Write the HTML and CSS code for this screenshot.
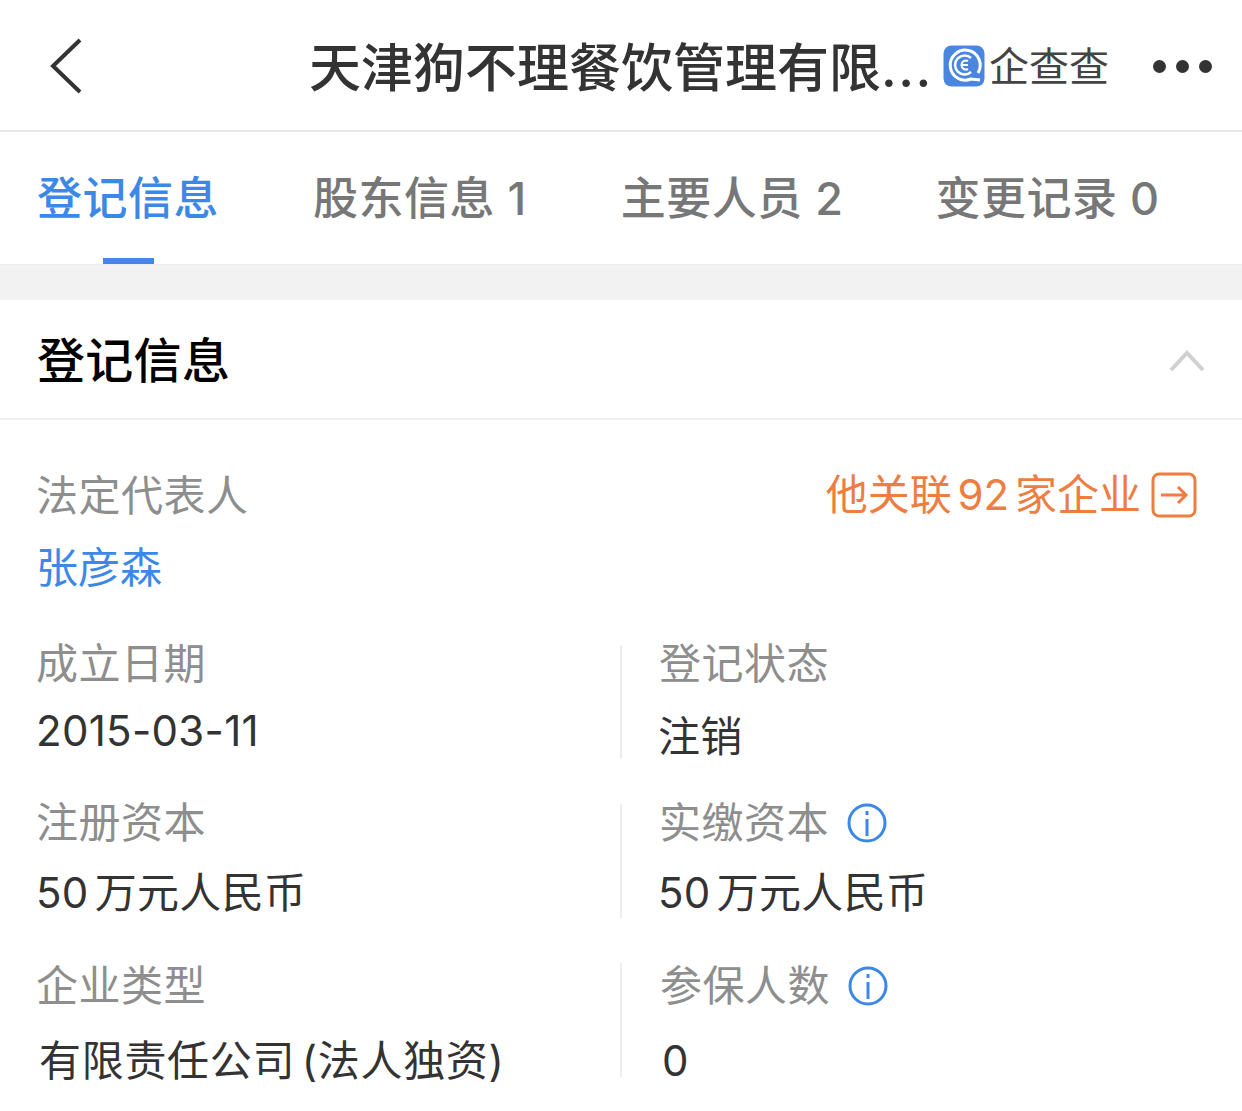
FILE: index.html
```html
<!DOCTYPE html>
<html lang="zh-CN">
<head>
  <meta charset="UTF-8" />
  <title>登记信息</title>
  <link rel="stylesheet" href="styles.css">
</head>
<body>

<div class="topbar">
  <svg class="back" width="34" height="56" viewBox="0 0 34 56"><path d="M31 2 L4 28 L31 54" fill="none" stroke="#333" stroke-width="4"/></svg>
  <div class="title">天津狗不理餐饮管理有限<span class="dots">...</span></div>
  <div class="brand">
    <svg width="42" height="42" viewBox="0 0 42 42">
      <rect width="41" height="41" x="0.5" y="0.5" rx="8" fill="#4a86e0"/>
      <path d="M35 28 A15 15 0 1 0 28 34 L37 35" fill="none" stroke="#fff" stroke-width="3"/>
      <path d="M28 27 A9.500 9.500 0 1 1 28 13" fill="none" stroke="#fff" stroke-width="2.500"/>
      <path d="M25 24 A4.500 4.500 0 1 1 25 16 M18 20 H25" fill="none" stroke="#fff" stroke-width="2"/>
    </svg>
    <span class="brand-name">企查查</span>
  </div>
  <div class="more"><i></i><i></i><i></i></div>
</div>

<div class="tabs">
  <div class="tab active">登记信息</div>
  <div class="tab">股东信息 1</div>
  <div class="tab">主要人员 2</div>
  <div class="tab last">变更记录 0</div>
</div>

<div class="band"></div>

<div class="section-head">
  <h2>登记信息</h2>
  <svg width="36" height="22" viewBox="0 0 36 22"><path d="M2 20 L18 3 L34 20" fill="none" stroke="#d0d0d0" stroke-width="4"/></svg>
</div>

<div class="info">
  <div class="person">
    <div class="person-top">
      <span class="label">法定代表人</span>
      <span class="link-out">他关联 92 家企业
        <svg width="46" height="46" viewBox="0 0 46 46"><rect x="2" y="2" width="42" height="42" rx="6" fill="none" stroke="#ee7d41" stroke-width="3"/><path d="M10 23 H35 M27 15 L35 23 L27 31" fill="none" stroke="#ee7d41" stroke-width="3"/></svg>
      </span>
    </div>
    <div class="person-name">张彦森</div>
  </div>

  <div class="grid">
    <div class="cell">
      <div class="label">成立日期</div>
      <div class="value date">2015-03-11</div>
    </div>
    <div class="cell right">
      <div class="label">登记状态</div>
      <div class="value tall">注销</div>
    </div>
    <div class="cell">
      <div class="label">注册资本</div>
      <div class="value mid">50 万元人民币</div>
    </div>
    <div class="cell right">
      <div class="label">实缴资本
        <svg class="tip" width="40" height="40" viewBox="0 0 40 40"><circle cx="20" cy="20" r="18" fill="none" stroke="#3c88e8" stroke-width="3"/><path d="M20 16 V33 M20 8 V12" fill="none" stroke="#3c88e8" stroke-width="3"/></svg>
      </div>
      <div class="value mid">50 万元人民币</div>
    </div>
    <div class="cell shift">
      <div class="label">企业类型</div>
      <div class="value">有限责任公司 (法人独资)</div>
    </div>
    <div class="cell right shift">
      <div class="label">参保人数
        <svg class="tip" width="40" height="40" viewBox="0 0 40 40"><circle cx="20" cy="20" r="18" fill="none" stroke="#3c88e8" stroke-width="3"/><path d="M20 16 V33 M20 8 V12" fill="none" stroke="#3c88e8" stroke-width="3"/></svg>
      </div>
      <div class="value">0</div>
    </div>
  </div>
</div>

</body>
</html>
```

FILE: styles.css
```css
* { box-sizing: border-box; }
html, body { height: 100%; }
body {
  margin: 0;
  background: #fff;
  color: #333;
  font-family: Inter, "Noto Sans CJK SC", sans-serif;
  overflow: hidden;
}
.topbar {
  height: 132px;
  border-bottom: 2px solid #e8e8e8;
  display: flex;
  align-items: center;
  padding: 4px 30px 2px 49px;
}
.back { flex: none; }
.title {
  margin: -4px 0 0 226px;
  font-size: 52px;
  font-weight: 500;
  white-space: nowrap;
  width: 634px;
  color: #333;
}
.dots { letter-spacing: 1.500px; }
.brand {
  display: flex;
  align-items: center;
  gap: 4px;
  width: 210px;
}
.brand-name { font-size: 40px; color: #444; line-height: 42px; padding-top: 2px; }
.more { display: flex; gap: 10px; }
.more i { width: 13px; height: 13px; border-radius: 50%; background: #333; }

.tabs {
  height: 132px;
  display: flex;
  padding-left: 37px;
  gap: 94px;
}
.tab {
  position: relative;
  font-size: 45px;
  line-height: 134px;
  color: #777;
  font-weight: 500;
  letter-spacing: 0.5px;
}
.tab.last { margin-left: -2px; }
.tab.active { color: #3c88e8; }
.tab.active::after {
  content: "";
  position: absolute;
  left: 66px;
  bottom: 0;
  width: 51px;
  height: 6px;
  background: #4488e6;
}
.band { height: 36px; background: #f2f2f2; border-top: 1px solid #ededed; }

.section-head {
  height: 120px;
  border-bottom: 2px solid #efefef;
  display: flex;
  align-items: center;
  justify-content: space-between;
  padding: 0 37px;
}
.section-head h2 { margin: 0 0 4px; font-size: 48px; font-weight: 500; letter-spacing: 0.3px; color: #000; }
.section-head svg { margin-top: 3px; }

.info { padding: 0 37px 0 36px; }
.person { padding-top: 50px; }
.person-top { display: flex; justify-content: space-between; align-items: center; height: 50px; }
.label { font-size: 42px; line-height: 50px; color: #8e8e8e; display: flex; align-items: center; letter-spacing: 0.5px; }
.person-top .label { margin-top: 2px; }
.link-out { display: flex; align-items: center; gap: 10px; font-size: 42px; line-height: 50px; color: #ee7d41; margin-right: 8px; word-spacing: -6px; }
.person-name { font-size: 42px; line-height: 50px; color: #3c88e8; margin-top: 23px; }

.grid {
  display: grid;
  grid-template-columns: 584px 1fr;
  row-gap: 45px;
  margin-top: 52px;
}
.cell { height: 114px; }
.cell .label { margin-top: -6px; }
.cell.right { border-left: 2px solid #eeeeee; padding-left: 36px; }
.cell.right .label { margin-left: 1px; }
.cell.shift .label { margin-top: -2px; }
.cell.right.shift .label { margin-left: 2px; }
.value { font-size: 42px; line-height: 50px; margin-top: 17px; color: #333; word-spacing: -6px; letter-spacing: 0.3px; }
.value.tall { margin-top: 23px; }
.value.mid { margin-top: 20px; }
.cell.shift .value { margin: 25px 0 0 3px; letter-spacing: 0.7px; }
.cell.right.shift .value { margin-left: 4px; }
.tip { margin-left: 18px; }
```
